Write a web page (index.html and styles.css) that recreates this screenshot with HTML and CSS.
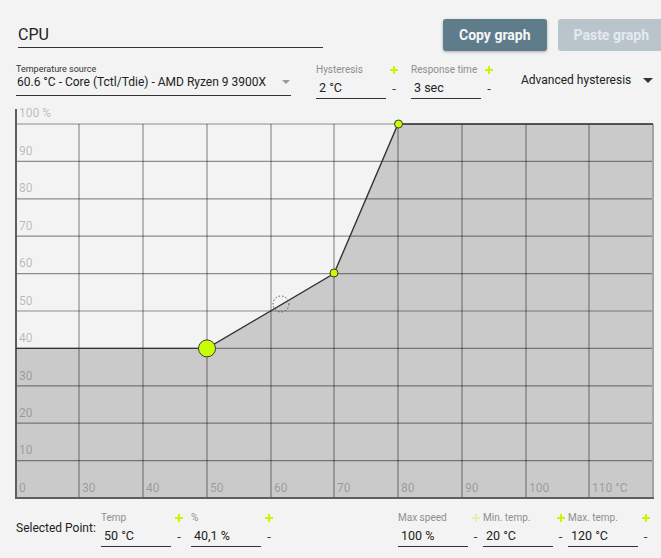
FILE: index.html
```html
<!DOCTYPE html>
<html>
<head>
  <meta charset="utf-8">
  <link rel="stylesheet" href="styles.css">
</head>
<body>
  <div class="header">
    <div class="name">CPU</div>
    <button class="btn btn-copy">Copy graph</button>
    <button class="btn btn-paste" disabled>Paste graph</button>
  </div>

  <div class="controls">
    <div class="source">
      <div class="source-label">Temperature source</div>
      <div class="source-value">
        <span>60.6 °C - Core (Tctl/Tdie) - AMD Ryzen 9 3900X</span>
        <span class="arrow arrow-light"></span>
      </div>
    </div>

    <div class="spins spins-top">
      <div class="spin">
        <div class="spin-main">
          <div class="spin-label">Hysteresis</div>
          <div class="spin-value">2 °C</div>
        </div>
        <div class="spin-btns"><span class="plus"></span><span class="minus">-</span></div>
      </div>
      <div class="spin">
        <div class="spin-main">
          <div class="spin-label">Response time</div>
          <div class="spin-value">3 sec</div>
        </div>
        <div class="spin-btns"><span class="plus"></span><span class="minus">-</span></div>
      </div>
    </div>

    <div class="advanced">
      <span>Advanced hysteresis</span>
      <span class="arrow arrow-dark"></span>
    </div>
  </div>

  <svg class="chart" width="661" height="400" viewBox="0 104 661 400">
    <polygon class="area" points="16,348 207,348 334,274 398,124 653,124 653,498 16,498"/>
    <g class="grid">
      <line x1="79" y1="124" x2="79" y2="498"/>
      <line x1="143" y1="124" x2="143" y2="498"/>
      <line x1="207" y1="124" x2="207" y2="498"/>
      <line x1="271" y1="124" x2="271" y2="498"/>
      <line x1="334" y1="124" x2="334" y2="498"/>
      <line x1="398" y1="124" x2="398" y2="498"/>
      <line x1="462" y1="124" x2="462" y2="498"/>
      <line x1="526" y1="124" x2="526" y2="498"/>
      <line x1="589" y1="124" x2="589" y2="498"/>
      <line x1="16" y1="124" x2="653" y2="124"/>
      <line x1="16" y1="161.4" x2="653" y2="161.4"/>
      <line x1="16" y1="198.8" x2="653" y2="198.8"/>
      <line x1="16" y1="236.2" x2="653" y2="236.2"/>
      <line x1="16" y1="273.6" x2="653" y2="273.6"/>
      <line x1="16" y1="311" x2="653" y2="311"/>
      <line x1="16" y1="348.4" x2="653" y2="348.4"/>
      <line x1="16" y1="385.8" x2="653" y2="385.8"/>
      <line x1="16" y1="423.2" x2="653" y2="423.2"/>
      <line x1="16" y1="460.6" x2="653" y2="460.6"/>
    </g>
    <line class="edge" x1="653" y1="124" x2="653" y2="498"/>
    <line class="axis" x1="16" y1="109" x2="16" y2="499"/>
    <line class="axis" x1="15" y1="498" x2="654" y2="498"/>
    <g class="labels">
      <text x="19" y="117">100 %</text>
      <text x="19" y="155">90</text>
      <text x="19" y="192">80</text>
      <text x="19" y="229.5">70</text>
      <text x="19" y="267">60</text>
      <text x="19" y="304.5">50</text>
      <text x="19" y="342">40</text>
      <text x="19" y="379.5">30</text>
      <text x="19" y="417">20</text>
      <text x="19" y="454">10</text>
      <text x="19" y="492">0</text>
      <text x="82" y="492">30</text>
      <text x="146" y="492">40</text>
      <text x="210" y="492">50</text>
      <text x="274" y="492">60</text>
      <text x="337" y="492">70</text>
      <text x="401" y="492">80</text>
      <text x="465" y="492">90</text>
      <text x="529" y="492">100</text>
      <text x="592" y="492">110 °C</text>
    </g>
    <polyline class="curve" points="16,348.4 207,348.4 334,273.6 398,124 653,124"/>
    <circle class="current" cx="281" cy="304" r="8"/>
    <circle class="point" cx="207" cy="348.4" r="8.5"/>
    <circle class="point" cx="334" cy="273" r="4"/>
    <circle class="point" cx="398.5" cy="124" r="4"/>
  </svg>

  <div class="bottom">
    <div class="selected">Selected Point:</div>
    <div class="spins spins-left">
      <div class="spin">
        <div class="spin-main">
          <div class="spin-label">Temp</div>
          <div class="spin-value">50 °C</div>
        </div>
        <div class="spin-btns"><span class="plus"></span><span class="minus">-</span></div>
      </div>
      <div class="spin">
        <div class="spin-main">
          <div class="spin-label">%</div>
          <div class="spin-value">40,1 %</div>
        </div>
        <div class="spin-btns"><span class="plus"></span><span class="minus">-</span></div>
      </div>
    </div>
    <div class="spins spins-right">
      <div class="spin">
        <div class="spin-main">
          <div class="spin-label">Max speed</div>
          <div class="spin-value">100 %</div>
        </div>
        <div class="spin-btns narrow"><span class="plus plus-off"></span><span class="minus">-</span></div>
      </div>
      <div class="spin">
        <div class="spin-main">
          <div class="spin-label">Min. temp.</div>
          <div class="spin-value">20 °C</div>
        </div>
        <div class="spin-btns narrow"><span class="plus"></span><span class="minus">-</span></div>
      </div>
      <div class="spin">
        <div class="spin-main">
          <div class="spin-label">Max. temp.</div>
          <div class="spin-value">120 °C</div>
        </div>
        <div class="spin-btns narrow"><span class="plus"></span><span class="minus">-</span></div>
      </div>
    </div>
  </div>
</body>
</html>
```

FILE: styles.css
```css
html, body {
  margin: 0;
  width: 661px;
  height: 558px;
  overflow: hidden;
}

body {
  background: #f2f3f2;
  font-family: Roboto, "Liberation Sans", sans-serif;
  color: #222;
}

/* header: name + graph buttons */
.header {
  display: flex;
  align-items: flex-start;
  height: 60px;
  padding: 19px 0 0 18px;
  box-sizing: border-box;
}

.name {
  width: 305px;
  flex-shrink: 0;
  margin-top: 6px;
  padding-bottom: 2px;
  font-size: 16px;
  line-height: 20px;
  border-bottom: 1px solid #333;
}

.btn {
  flex-shrink: 0;
  height: 32px;
  padding: 0 16px;
  border: none;
  border-radius: 3px;
  font-family: Roboto, "Liberation Sans", sans-serif;
  font-size: 14px;
  font-weight: bold;
}

.btn-copy {
  margin-left: 120px;
  background: #5f7c8a;
  color: #f4f6f7;
  box-shadow: 0 1px 3px rgba(0,0,0,0.3);
}

.btn-paste {
  margin-left: 11px;
  background: #b9c5cb;
  color: #e4eaed;
}

/* controls row */
.controls {
  display: flex;
  align-items: flex-start;
  height: 44px;
  padding-left: 16px;
  white-space: nowrap;
}

.source {
  width: 275px;
  flex-shrink: 0;
  margin-top: 4px;
}

.source-label {
  font-size: 9px;
  line-height: 11px;
  color: #333;
}

.source-value {
  display: flex;
  align-items: center;
  justify-content: space-between;
  margin-top: -1px;
  padding: 0 0 5px 1px;
  font-size: 12px;
  line-height: 16px;
  border-bottom: 1px solid #333;
}

.arrow {
  width: 0;
  height: 0;
  border-left: 4px solid transparent;
  border-right: 4px solid transparent;
}

.arrow-light {
  border-top: 4px solid #9a9a9a;
  margin-right: 1px;
}

.arrow-dark {
  border-left-width: 5px;
  border-right-width: 5px;
  border-top: 5px solid #333;
  margin-left: 12px;
}

.spins {
  display: flex;
  flex-shrink: 0;
}

.spins-top {
  margin-left: 25px;
  gap: 9px;
}

.spin {
  display: flex;
  margin-top: 4px;
}

.spin-main {
  width: 70px;
}

.spin-label {
  font-size: 10px;
  line-height: 11px;
  color: #8f8f8f;
}

.spin-value {
  margin-top: 5px;
  padding: 0 0 2px 3px;
  font-size: 12.5px;
  line-height: 16px;
  border-bottom: 1px solid #333;
}

.spin-btns {
  width: 16px;
  display: flex;
  flex-direction: column;
  align-items: center;
}

.spin-btns.narrow {
  width: 15px;
}

.plus {
  position: relative;
  width: 8px;
  height: 8px;
  margin-top: 2px;
}

.plus::before,
.plus::after {
  content: "";
  position: absolute;
  background: #c8f800;
}

.plus::before {
  left: 0;
  top: 3px;
  width: 8px;
  height: 2px;
}

.plus::after {
  left: 3px;
  top: 0;
  width: 2px;
  height: 8px;
}

.plus-off::before,
.plus-off::after {
  background: #e3f2a8;
}

.minus {
  margin-top: 7px;
  font-size: 13px;
  line-height: 16px;
  color: #333;
}

.advanced {
  display: flex;
  align-items: center;
  margin: 12px 0 0 24px;
  font-size: 12px;
  line-height: 16px;
}

/* chart */
.chart {
  display: block;
  font-family: Roboto, "Liberation Sans", sans-serif;
}

.area {
  fill: #c9cac9;
}

.grid line {
  stroke: rgba(0,0,0,0.42);
  stroke-width: 1.2;
}

.edge {
  stroke: #a3a4a3;
  stroke-width: 2;
}

.axis {
  stroke: #5e5e5e;
  stroke-width: 2;
}

.labels text {
  font-size: 12px;
  fill: rgba(0,0,0,0.25);
}

.curve {
  fill: none;
  stroke: #333;
  stroke-width: 1.4;
}

.point {
  fill: #c8ff00;
  stroke: #3a3a3a;
  stroke-width: 1;
}

.current {
  fill: none;
  stroke: #555;
  stroke-width: 1;
  stroke-dasharray: 1.5 2;
}

/* bottom row */
.bottom {
  display: flex;
  align-items: flex-start;
  padding-left: 16px;
  white-space: nowrap;
}

.selected {
  width: 85px;
  flex-shrink: 0;
  margin-top: 16px;
  font-size: 12px;
  line-height: 16px;
}

.bottom .spin {
  margin-top: 8px;
}

.spins-left {
  gap: 4px;
}

.spins-right {
  margin-left: 121px;
}
```
